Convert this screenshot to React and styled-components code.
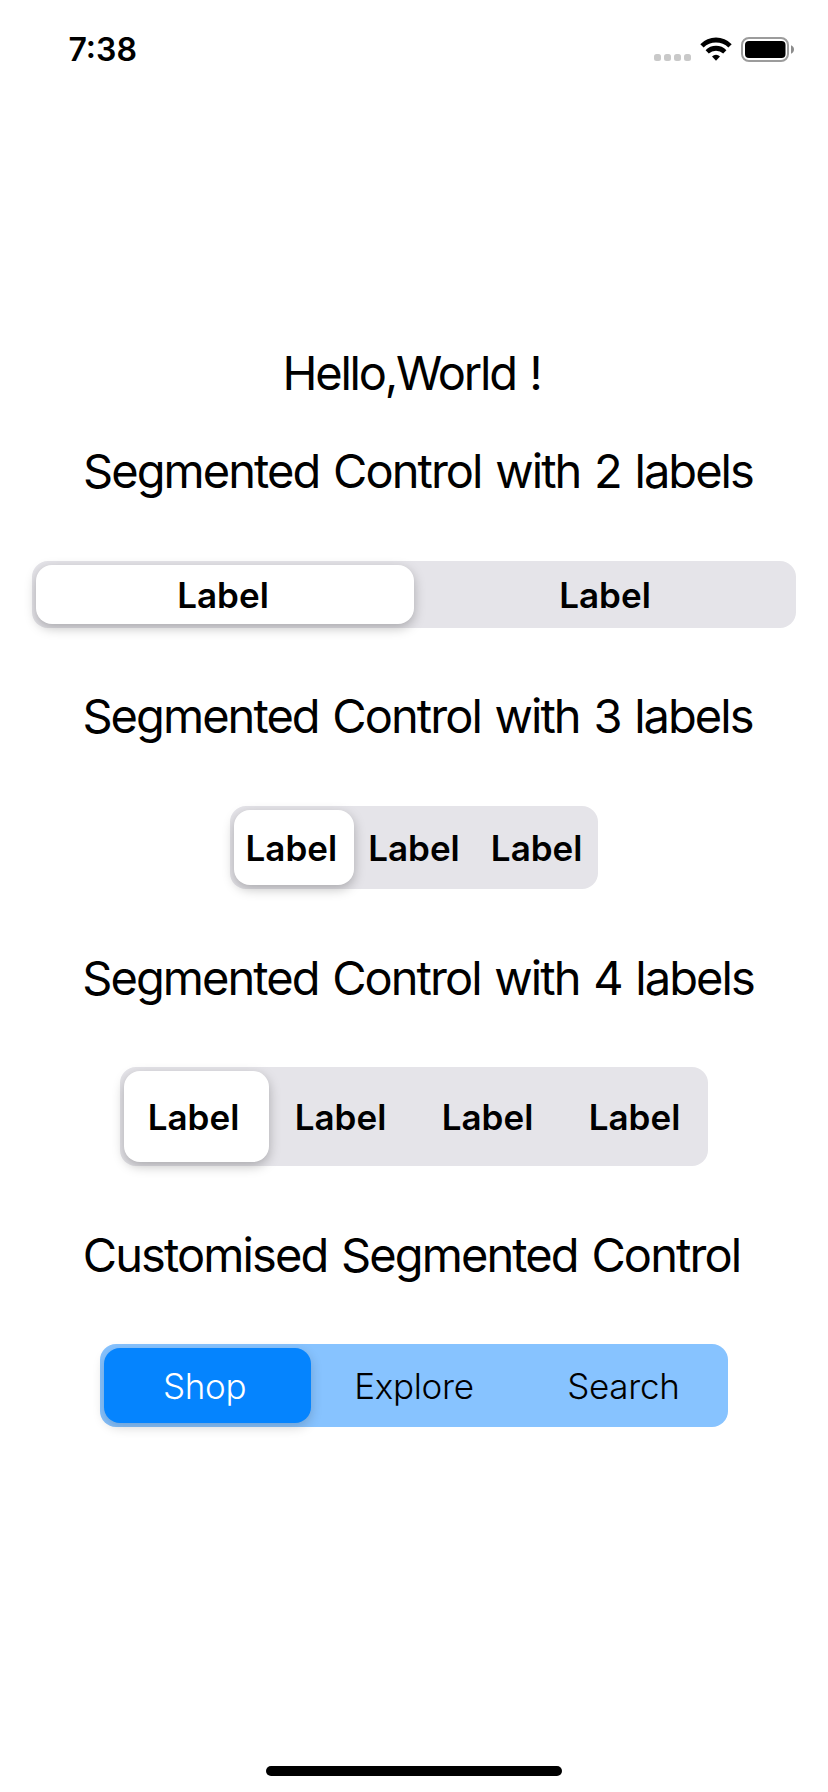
import React, { useState } from "react";
import styled, { createGlobalStyle } from "styled-components";

const GlobalStyle = createGlobalStyle`
  *, *::before, *::after { box-sizing: border-box; }
  body {
    margin: 0;
    background: #fff;
    color: #000;
    font-family: Inter, "Liberation Sans", sans-serif;
  }
`;

const Screen = styled.div`
  display: flex;
  flex-direction: column;
  width: 828px;
  height: 1792px;
  background: #fff;
  overflow: hidden;
`;

const StatusBar = styled.header`
  display: flex;
  align-items: flex-start;
  justify-content: space-between;
  height: 88px;
  padding: 30px 34px 0 68.5px;
`;

const Clock = styled.time`
  font-size: 32px;
  line-height: 40px;
  font-weight: 600;
  letter-spacing: 0;
`;

const StatusIcons = styled.div`
  display: flex;
  align-items: flex-end;
  height: 32px;
`;

const SignalDots = styled.div`
  display: flex;
  gap: 3px;
  margin: 0 9px 1px 0;
`;

const SignalDot = styled.span`
  width: 7px;
  height: 7px;
  border-radius: 2.5px;
  background: #c9c9c9;
`;

const WifiGlyph = styled.svg`
  width: 32px;
  height: 24px;
  margin: 0 9.5px 1px 0;
`;

const BatteryGlyph = styled.svg`
  width: 53px;
  height: 25px;
`;

const Content = styled.main`
  flex: 1;
  display: flex;
  flex-direction: column;
  align-items: center;
  padding-top: 257px;
`;

const Title = styled.h2`
  margin: 0 0 0 ${(p) => p.$indent || 0}px;
  font-size: 47px;
  line-height: 56px;
  font-weight: 400;
  letter-spacing: ${(p) => p.$tracking ?? -1.95}px;
  word-spacing: 2.4px;
  white-space: nowrap;
`;

const Section = styled.section`
  display: flex;
  flex-direction: column;
  align-items: center;
  gap: ${(p) => p.$gap}px;
  margin-top: ${(p) => p.$top}px;
`;

const Track = styled.div`
  position: relative;
  display: grid;
  grid-template-columns: repeat(${(p) => p.$count}, 1fr);
  width: ${(p) => p.$width}px;
  height: ${(p) => p.$height}px;
  border-radius: 16px;
  background: ${(p) => p.$color};
`;

const Thumb = styled.span`
  position: absolute;
  top: 4px;
  bottom: 4px;
  left: 4px;
  width: calc((100% - 8px) / ${(p) => p.$count});
  border-radius: 16px;
  background: ${(p) => p.$color};
  box-shadow: 0 4px 12px rgba(0, 0, 0, ${(p) => p.$shade});
  transform: translateX(${(p) => p.$index * 100}%);
`;

const Segment = styled.button`
  position: relative;
  border: 0;
  padding: 0;
  background: transparent;
  color: ${(p) => p.$color};
  font-family: inherit;
  font-size: 35px;
  line-height: 42px;
  font-weight: ${(p) => p.$weight};
  letter-spacing: ${(p) => p.$tracking}px;
  white-space: nowrap;
`;

const HomeBar = styled.div`
  align-self: center;
  width: 296px;
  height: 10px;
  margin-bottom: 16px;
  border-radius: 5px;
  background: #000;
`;

const plain = {
  track: "#e5e4e9",
  thumb: "#fff",
  shade: 0.26,
  text: "#000",
  activeText: "#000",
  weight: 600,
  tracking: 0,
};

const blue = {
  track: "#87c3ff",
  thumb: "#0584fe",
  shade: 0.18,
  text: "#000",
  activeText: "#fff",
  weight: 300,
  tracking: -0.3,
};

function SegmentedControl({ labels, width, height, look = plain }) {
  const [selected, setSelected] = useState(0);
  return (
    <Track $count={labels.length} $width={width} $height={height} $color={look.track}>
      <Thumb $count={labels.length} $index={selected} $color={look.thumb} $shade={look.shade} />
      {labels.map((label, i) => (
        <Segment
          key={i}
          type="button"
          onClick={() => setSelected(i)}
          $color={i === selected ? look.activeText : look.text}
          $weight={look.weight}
          $tracking={look.tracking}
        >
          {label}
        </Segment>
      ))}
    </Track>
  );
}

function Wifi() {
  return (
    <WifiGlyph viewBox="0 0 32 24" aria-hidden="true">
      <path d="M0.3 7.2A22 22 0 0 1 31.7 7.2L28.4 10.6A17.6 17.6 0 0 0 3.6 10.6Z" />
      <path d="M5.6 13.2A14.2 14.2 0 0 1 26.4 13.2L23.2 16.6A10.3 10.3 0 0 0 8.8 16.6Z" />
      <path d="M12 19.4A6 6 0 0 1 20 19.4L16 23.8Z" />
    </WifiGlyph>
  );
}

function Battery() {
  return (
    <BatteryGlyph viewBox="0 0 53 25" aria-hidden="true">
      <rect x="1" y="1" width="46" height="23" rx="7" fill="none" stroke="#9c9c9c" strokeWidth="2" />
      <rect x="4" y="4" width="40.5" height="17" rx="4" />
      <path d="M50 8.3Q53 9.6 53 12.5Q53 15.4 50 16.7Z" fill="#8c8c8c" />
    </BatteryGlyph>
  );
}

export default function App() {
  return (
    <Screen>
      <GlobalStyle />
      <StatusBar>
        <Clock>7:38</Clock>
        <StatusIcons>
          <SignalDots>
            <SignalDot />
            <SignalDot />
            <SignalDot />
            <SignalDot />
          </SignalDots>
          <Wifi />
          <Battery />
        </StatusIcons>
      </StatusBar>
      <Content>
        <Title $tracking={-2.2} $indent={-5}>Hello,World !</Title>
        <Section $top={42} $gap={62}>
          <Title $indent={8}>Segmented Control with 2 labels</Title>
          <SegmentedControl labels={["Label", "Label"]} width={764} height={67} />
        </Section>
        <Section $top={60} $gap={62}>
          <Title $indent={7}>Segmented Control with 3 labels</Title>
          <SegmentedControl labels={["Label", "Label", "Label"]} width={368} height={83} />
        </Section>
        <Section $top={61} $gap={61}>
          <Title $indent={8}>Segmented Control with 4 labels</Title>
          <SegmentedControl labels={["Label", "Label", "Label", "Label"]} width={588} height={99} />
        </Section>
        <Section $top={61} $gap={61}>
          <Title $tracking={-1.9} $indent={-5}>Customised Segmented Control</Title>
          <SegmentedControl labels={["Shop", "Explore", "Search"]} width={628} height={83} look={blue} />
        </Section>
      </Content>
      <HomeBar />
    </Screen>
  );
}
